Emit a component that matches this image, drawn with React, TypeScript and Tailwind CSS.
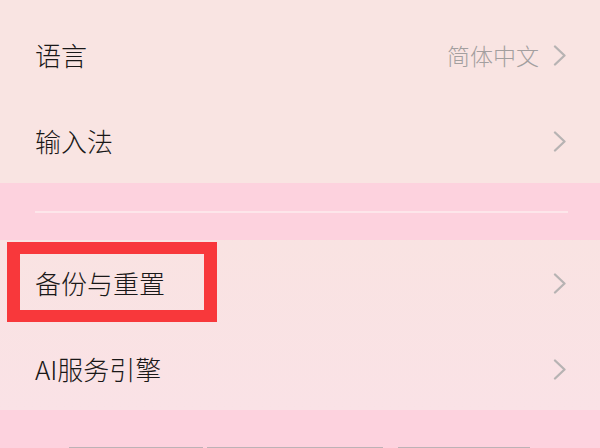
import React from 'react';

const Chevron = () => (
  <svg width="14" height="21" viewBox="0 0 14 21" fill="none" className="shrink-0">
    <polyline points="2,1.5 11.5,10.5 2,19.5" stroke="#b7b3b3" strokeWidth="2.3" strokeLinecap="round" strokeLinejoin="round" />
  </svg>
);

const Row = ({ label, value, children }: { label: string; value?: string; children?: React.ReactNode }) => (
  <div className="relative flex items-center h-[86px] pl-[35px] pr-[33px]">
    {children}
    <span className="relative text-[26px] leading-none font-light text-[#1a1818]">{label}</span>
    <div className="flex-1" />
    {value && <span className="text-[23px] leading-none font-light text-[#a39f9f] mr-[14px]">{value}</span>}
    <Chevron />
  </div>
);

export default function App() {
  return (
    <div
      className="w-[600px] h-[448px] overflow-hidden bg-[#fdd2de] flex flex-col"
      style={{ fontFamily: '"Noto Sans CJK SC", "Noto Sans", sans-serif' }}
    >
      <div className="h-[183px] pt-[12px] bg-[#f9e4e2]">
        <Row label="语言" value="简体中文" />
        <Row label="输入法" />
      </div>

      <div className="h-[57px] pt-[28px] px-[35px] pr-[32px]">
        <div className="h-[2px] bg-[#fde6ea]" />
      </div>

      <div className="h-[170px] bg-gradient-to-b from-[#f9e3e2] to-[#fae2e6]">
        <Row label="备份与重置">
          <div className="absolute left-[7px] top-[2px] w-[210px] h-[80px] border-x-[13px] border-y-[12px] border-[#f8383b]" />
        </Row>
        <Row label="AI服务引擎" />
      </div>

      <div className="flex-1 flex items-end">
        <div className="ml-[69px] w-[134px] h-px bg-[#bdb2b6]" />
        <div className="ml-[4px] w-[176px] h-px bg-[#bdb2b6]" />
        <div className="ml-[15px] w-[132px] h-px bg-[#bdb2b6]" />
      </div>
    </div>
  );
}
